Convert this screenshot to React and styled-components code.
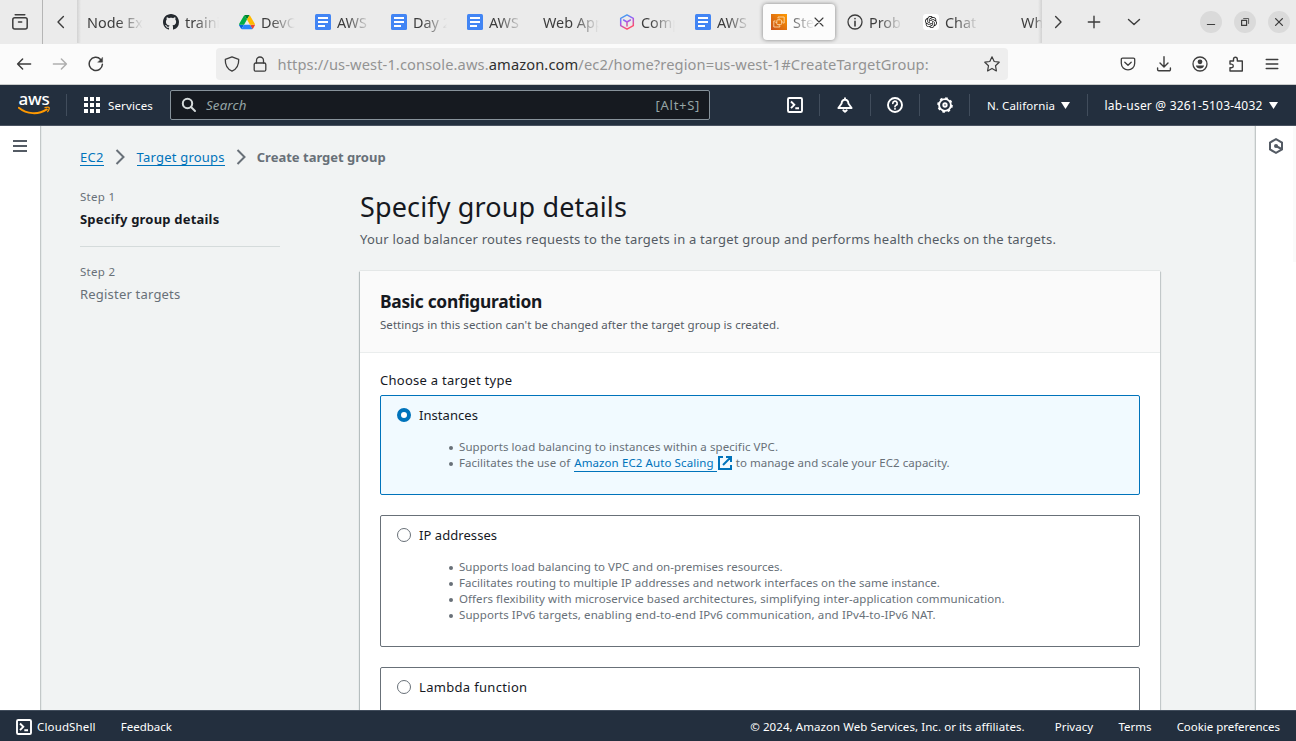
import React from "react";
import styled, { createGlobalStyle, css } from "styled-components";
import { SiOpenai } from "react-icons/si";

const Global = createGlobalStyle`
  * { box-sizing: border-box; }
  html, body { margin: 0; padding: 0; }
  body { font-family: "Noto Sans", "Open Sans", sans-serif; overflow: hidden; }
`;

const Window = styled.div`
  width: 1296px;
  height: 741px;
  display: flex;
  flex-direction: column;
  overflow: hidden;
  background: #f1f3f3;
`;

/* ---------- Browser chrome ---------- */
const TabBar = styled.div`
  height: 44px;
  flex: none;
  display: flex;
  background: #ebebeb;
  color: #3d3d3d;
`;
const BarCell = styled.div`
  width: ${(p) => p.$w}px;
  flex: none;
  display: flex;
  align-items: center;
  justify-content: center;
  padding-left: ${(p) => p.$pl || 0}px;
  padding-right: ${(p) => p.$pr || 0}px;
  border-right: ${(p) => (p.$divider ? "1px solid #b5b5b5" : "0")};
`;
const TabStrip = styled.div`
  width: 965px;
  flex: none;
  display: flex;
  overflow: hidden;
  position: relative;
  &::before, &::after {
    content: "";
    position: absolute;
    top: 0;
    bottom: 1px;
    width: 4px;
  }
  &::before { left: 0; background: linear-gradient(90deg, #d2d2d2, #ebebeb); }
  &::after { right: 0; background: linear-gradient(270deg, #d2d2d2, #ebebeb00); }
`;
const Tab = styled.div`
  width: 72px;
  height: 36px;
  margin: 4px 2px;
  padding: 0 8px;
  flex: none;
  display: flex;
  align-items: center;
  gap: 6px;
  border-radius: 4px;
  ${(p) => p.$active && css`
    background: #fcfcfc;
    box-shadow: 0 0 4px rgba(0, 0, 0, 0.45);
  `}
`;
const TabIcon = styled.span`
  width: 16px;
  height: 16px;
  flex: none;
  display: flex;
`;
const TabLabel = styled.span`
  flex: 1;
  min-width: 0;
  overflow: hidden;
  white-space: nowrap;
  font-size: 14.4px;
  line-height: 20px;
  padding-top: 1px;
  mask-image: linear-gradient(to left, transparent 0, #000 ${(p) => p.$fade}px);
`;
const TabClose = styled.span`
  width: 10px;
  margin-left: -7px;
  margin-right: 3px;
  flex: none;
  display: flex;
`;
const WinButtons = styled.div`
  flex: 1;
  display: flex;
  justify-content: flex-end;
  align-items: center;
  gap: 12px;
  padding-right: 6px;
`;
const WinButton = styled.span`
  width: 22px;
  height: 22px;
  border-radius: 50%;
  background: #dadada;
  display: flex;
  align-items: center;
  justify-content: center;
`;
const Toolbar = styled.div`
  height: 41px;
  flex: none;
  display: flex;
  align-items: center;
  background: #fbfbfb;
  border-bottom: 1px solid #cacccb;
  color: #3d3d3d;
`;
const NavButtons = styled.div`
  width: 216px;
  padding-left: 16px;
  display: flex;
  gap: 20px;
`;
const UrlBar = styled.div`
  width: 792px;
  height: 32px;
  display: flex;
  align-items: center;
  padding: 0 8px;
  border-radius: 4px;
  background: #eeeeee;
`;
const Url = styled.span`
  flex: 1;
  margin-left: 9.5px;
  padding-bottom: 1px;
  font-size: 14.67px;
  line-height: 20px;
  color: #939393;
  white-space: nowrap;
  letter-spacing: 0.11px;
  b { font-weight: 400; color: #2f2f2f; }
`;
const ToolbarEnd = styled.div`
  flex: 1;
  display: flex;
  justify-content: flex-end;
  gap: 20px;
  padding-right: 16px;
`;

/* ---------- Console header ---------- */
const ConsoleHeader = styled.header`
  height: 41px;
  flex: none;
  display: flex;
  align-items: center;
  background: #232f3e;
  border-bottom: 1px solid #4a5361;
  color: #fff;
`;
const AwsLogo = styled.div`
  width: 32px;
  margin-left: 18px;
  padding-bottom: 2px;
  display: flex;
  flex-direction: column;
  align-items: center;
  span { font-size: 17px; font-weight: 500; line-height: 12px; height: 13px; letter-spacing: -0.3px; }
`;
const HeaderRule = styled.span`
  width: 1px;
  height: 22px;
  background: #414d5c;
  margin-left: 16px;
`;
const ServicesButton = styled.div`
  display: flex;
  align-items: center;
  gap: 8px;
  margin-left: 17px;
  width: 86px;
`;
const Label = styled.span`
  font-size: ${(p) => p.$size || 11.5}px;
  letter-spacing: ${(p) => p.$ls || 0}px;
  line-height: 16px;
  padding-top: ${(p) => p.$drop || 0}px;
  white-space: nowrap;
`;
const SearchBox = styled.div`
  width: 540px;
  height: 30px;
  display: flex;
  align-items: center;
  padding: 0 9px 0 10px;
  background: #161a20;
  border: 1px solid #87929a;
  border-radius: 2px;
  color: #95a5a6;
  font-size: 13.3px;
  em { flex: 1; margin-left: 9px; letter-spacing: 0.15px; }
  span { font-size: 13px; letter-spacing: 0.7px; }
`;
const HeaderTools = styled.div`
  margin-left: 59px;
  display: flex;
  align-items: center;
`;
const ToolCell = styled.div`
  width: ${(p) => p.$w}px;
  height: 22px;
  padding-left: ${(p) => p.$pl || 0}px;
  display: flex;
  align-items: center;
  justify-content: center;
  gap: 6px;
  border-right: ${(p) => (p.$last ? "0" : "1px solid #414d5c")};
`;

/* ---------- Page body ---------- */
const Body = styled.div`
  height: 584px;
  flex: none;
  display: flex;
  overflow: hidden;
`;
const SideRail = styled.aside`
  width: ${(p) => (p.$right ? 41 : 40)}px;
  flex: none;
  display: flex;
  justify-content: center;
  padding-top: ${(p) => (p.$right ? 12 : 14)}px;
  background: ${(p) => (p.$right ? "linear-gradient(#fafafa, #fafafa) right top / 3px 136px no-repeat #fff" : "#fff")};
  z-index: 1;
  box-shadow: ${(p) => (p.$right ? "inset 1px 0 0 #c3c8c8, -1px 0 0 #e2e6e6" : "1px 0 0 #c3c8c8, 2px 0 0 #e6eaea")};
`;
const Page = styled.main`
  flex: 1;
  min-width: 0;
  padding: 20px 40px 0;
  overflow: hidden;
`;
const Breadcrumbs = styled.nav`
  display: flex;
  align-items: center;
  height: 22px;
  font-size: 13px;
  color: #687078;
  svg { margin: 0 11px 0 11px; }
`;
const Crumb = styled.a`
  color: #0073bb;
  line-height: 16px;
  border-bottom: 1px solid #0073bb;
  white-space: nowrap;
  letter-spacing: 0.22px;
`;
const CrumbCurrent = styled.b`
  color: #687078;
  white-space: nowrap;
  margin-left: -1px;
`;
const Columns = styled.div`
  display: flex;
`;
const Steps = styled.div`
  width: 200px;
  margin-right: 79px;
  flex: none;
  padding-top: 20px;
`;
const Step = styled.div`
  height: ${(p) => (p.$first ? 59 : 75)}px;
  border-bottom: ${(p) => (p.$first ? "1px solid #d5dbdb" : "0")};
  padding-top: ${(p) => (p.$first ? 0 : 16)}px;
  color: #687078;
`;
const StepNo = styled.div`
  font-size: 11.5px;
  line-height: 18px;
  letter-spacing: 0.3px;
`;
const StepName = styled.div`
  margin-top: 2px;
  font-size: 13px;
  line-height: 22px;
  font-weight: ${(p) => (p.$current ? 700 : 400)};
  color: ${(p) => (p.$current ? "#16191f" : "#687078")};
  letter-spacing: 0.2px;
  white-space: nowrap;
`;
const Content = styled.section`
  width: 802px;
  flex: none;
  padding-top: 21px;
`;
const Title = styled.h1`
  margin: 0 0 0 1px;
  font-size: 27px;
  line-height: 36px;
  font-weight: 400;
  color: #16191f;
  letter-spacing: 0.14px;
  white-space: nowrap;
`;
const Lead = styled.p`
  margin: 3px 0 0 1px;
  font-size: 13px;
  line-height: 22px;
  color: #545b64;
  letter-spacing: 0.217px;
  white-space: nowrap;
`;
const Card = styled.div`
  margin: 21px 0 0 1px;
  width: 800px;
  background: #fff;
  box-shadow: 0 0 1px 0 rgba(0, 28, 36, 0.3), 1px 1px 1px 0 rgba(0, 28, 36, 0.15), -1px 1px 1px 0 rgba(0, 28, 36, 0.2);
`;
const CardHeader = styled.div`
  height: 82px;
  padding: 18px 20px 0;
  background: #fafafa;
  border-bottom: 1px solid #eaeded;
`;
const CardTitle = styled.h2`
  margin: 0;
  font-size: 17.4px;
  line-height: 24px;
  color: #16191f;
  letter-spacing: -0.29px;
`;
const CardHint = styled.p`
  margin: 3px 0 0;
  font-size: 11.5px;
  line-height: 18px;
  color: #545b64;
  letter-spacing: 0.048px;
`;
const CardBody = styled.div`
  padding: 16px 20px 0;
  display: flex;
  flex-direction: column;
`;
const FieldLabel = styled.div`
  font-size: 13px;
  line-height: 22px;
  margin-bottom: 4px;
  color: #16191f;
  letter-spacing: 0.27px;
`;
const Tile = styled.div`
  height: ${(p) => p.$h}px;
  margin-bottom: 20px;
  padding: 8px 15px 0 16px;
  background: ${(p) => (p.$selected ? "#f1faff" : "#fff")};
  border: 1px solid ${(p) => (p.$selected ? "#0073bb" : "#687078")};
  border-radius: 2px;
`;
const TileHead = styled.div`
  display: flex;
  align-items: center;
  gap: 8px;
  font-size: 13px;
  line-height: 22px;
  color: #16191f;
  letter-spacing: ${(p) => p.$ls || 0}px;
`;
const Radio = styled.span`
  width: 14px;
  height: 14px;
  border-radius: 50%;
  background: #fff;
  border: ${(p) => (p.$on ? "4px solid #0073bb" : "1px solid #687078")};
`;
const Points = styled.ul`
  margin: 13px 0 0 53px;
  padding: 0;
  list-style: none;
`;
const Point = styled.li`
  display: flex;
  align-items: center;
  height: 16px;
  font-size: 11.5px;
  line-height: 16px;
  color: #687078;
  white-space: nowrap;
  letter-spacing: ${(p) => p.$ls || 0}px;
  &::before {
    content: "";
    width: 4px;
    height: 4px;
    margin: 1px 6px 0 -1px;
    border-radius: 50%;
    background: #687078;
  }
`;
const ExternalLink = styled.a`
  display: inline-flex;
  align-items: center;
  margin: 0 4px 0 4px;
  color: #0073bb;
  letter-spacing: 0.1px;
  span { border-bottom: 1px solid #0073bb; padding-right: 3px; }
  svg { margin-left: 1px; }
`;

/* ---------- Footer ---------- */
const Footer = styled.footer`
  height: 31px;
  flex: none;
  display: flex;
  align-items: center;
  padding: 2px 16px 0;
  background: #232f3e;
  border-top: 1px solid #414d5c;
  color: #fff;
  z-index: 2;
`;
const FooterLinks = styled.div`
  flex: 1;
  display: flex;
  align-items: center;
  gap: 5px;
`;
const FooterLegal = styled.div`
  display: flex;
`;
const Spacer = styled.span`
  width: ${(p) => p.$w}px;
`;

/* ---------- Icons ---------- */
const Ico = ({ s = 16, w = 1.3, children, vb = 16 }) => (
  <svg width={s} height={s} viewBox={`0 0 ${vb} ${vb}`} fill="none" stroke="currentColor" strokeWidth={w} strokeLinecap="round" strokeLinejoin="round">
    {children}
  </svg>
);
const DocIcon = () => (
  <svg width="16" height="16"><rect width="16" height="16" rx="1.5" fill="#4285f4" /><path d="M3 4h10M3 8h10M3 12h7" stroke="#fff" strokeWidth="1.8" /></svg>
);
const GithubIcon = () => (
  <svg width="16" height="16" viewBox="0 0 16 16" fill="#24292f"><path d="M8 0C3.58 0 0 3.58 0 8c0 3.54 2.29 6.53 5.47 7.59.4.07.55-.17.55-.38 0-.19-.01-.82-.01-1.49-2.01.37-2.53-.49-2.69-.94-.09-.23-.48-.94-.82-1.13-.28-.15-.68-.52-.01-.53.63-.01 1.08.58 1.23.82.72 1.21 1.87.87 2.33.66.07-.52.28-.87.51-1.07-1.78-.2-3.64-.89-3.64-3.95 0-.87.31-1.59.82-2.15-.08-.2-.36-1.02.08-2.12 0 0 .67-.21 2.2.82.64-.18 1.32-.27 2-.27s1.36.09 2 .27c1.53-1.04 2.2-.82 2.2-.82.44 1.1.16 1.92.08 2.12.51.56.82 1.27.82 2.15 0 3.07-1.87 3.75-3.65 3.95.29.25.54.73.54 1.48 0 1.07-.01 1.93-.01 2.2 0 .21.15.46.55.38A8.01 8.01 0 0 0 16 8c0-4.42-3.58-8-8-8z" /></svg>
);
const DriveIcon = () => (
  <svg width="16" height="16" viewBox="0 0 87.3 87.3"><g transform="translate(0 5)">
    <path d="m6.6 66.85 3.85 6.65c.8 1.4 1.95 2.5 3.3 3.3L27.5 53H0c0 1.55.4 3.1 1.2 4.5z" fill="#0066da" />
    <path d="M43.65 25 29.9 1.2c-1.35.8-2.5 1.9-3.3 3.3L1.2 48.5A9 9 0 0 0 0 53h27.5z" fill="#00ac47" />
    <path d="M73.55 76.8c1.35-.8 2.5-1.9 3.3-3.3l9.25-16c.8-1.4 1.2-2.95 1.2-4.5H59.8l5.85 11.5z" fill="#ea4335" />
    <path d="M43.65 25 57.4 1.2C56.05.4 54.5 0 52.9 0H34.4c-1.6 0-3.15.45-4.5 1.2z" fill="#00832d" />
    <path d="M59.8 53H27.5L13.75 76.8c1.35.8 2.9 1.2 4.5 1.2h50.8c1.6 0 3.15-.45 4.5-1.2z" fill="#2684fc" />
    <path d="m73.4 26.5-12.7-22c-.8-1.4-1.95-2.5-3.3-3.3L43.65 25 59.8 53h27.45c0-1.55-.4-3.1-1.2-4.5z" fill="#ffba00" /></g>
  </svg>
);
const CubeIcon = () => (
  <svg width="16" height="16" viewBox="0 0 16 16" fill="none" stroke="url(#cube)" strokeWidth="1.5" strokeLinejoin="round" strokeLinecap="round">
    <defs><linearGradient id="cube" x1="0" y1="0" x2="0.4" y2="1"><stop offset="0" stopColor="#21b8ee" /><stop offset=".5" stopColor="#9b5cf6" /><stop offset="1" stopColor="#ff4d6d" /></linearGradient></defs>
    <path d="M8 .9 14.3 4.4v7.2L8 15.1 1.7 11.6V4.4zM4.6 6 8 8l3.4-2M8 8v4" />
  </svg>
);
const Ec2Icon = () => (
  <svg width="16" height="16" viewBox="0 0 16 16" fill="none" stroke="#ffe3bd" strokeWidth="0.8">
    <defs><linearGradient id="ec2" x1="0" y1="1" x2="1" y2="0"><stop stopColor="#c8511b" /><stop offset="1" stopColor="#ff9900" /></linearGradient></defs>
    <rect width="16" height="16" fill="url(#ec2)" stroke="none" />
    <rect x="5.8" y="5.8" width="4.8" height="4.8" rx="1" />
    <path d="M7 4.3V3h6.2v6h-1.3M4.5 7H2.8v6h6v-1.2M8.2 4.4v1.2M11 8h1M4.5 8.5h1.2M8.2 10.8v1" />
  </svg>
);
const InfoIcon = () => <Ico><circle cx="8" cy="8" r="7" /><path d="M8 7.2V12M8 4.6v.2" strokeWidth="1.6" /></Ico>;
const GptBadge = styled.span`
  width: 16px;
  height: 16px;
  border-radius: 3px;
  background: #fff;
  display: flex;
  align-items: center;
  justify-content: center;
  color: #111;
  font-size: 12px;
`;
const ShellIcon = () => (
  <svg width="16" height="16" viewBox="0 0 16 16" fill="none" stroke="#fff" strokeWidth="1.9"><rect x="1" y="1" width="14" height="14" rx="1.3" /><path d="m4 4.5 3.3 3.3L4 11.2M8.3 11.3H12" /></svg>
);
const Caret = () => <svg width="9" height="7" viewBox="0 0 9 7"><path d="M0 0h9L4.5 7z" fill="#fff" /></svg>;
const CrumbArrow = () => <svg width="11" height="16" viewBox="0 0 11 16" fill="none" stroke="#687078" strokeWidth="2"><path d="m1.5 1 7 7-7 7" /></svg>;

const tabs = [
  { label: "Node Ex" },
  { icon: <GithubIcon />, label: "traini" },
  { icon: <DriveIcon />, label: "DevO" },
  { icon: <DocIcon />, label: "AWS" },
  { icon: <DocIcon />, label: "Day 2" },
  { icon: <DocIcon />, label: "AWS" },
  { label: "Web App" },
  { icon: <CubeIcon />, label: "Comp" },
  { icon: <DocIcon />, label: "AWS" },
  { icon: <Ec2Icon />, label: "Ste", active: true },
  { icon: <InfoIcon />, label: "Prob" },
  { icon: <GptBadge><SiOpenai /></GptBadge>, label: "Chat" },
  { icon: <span />, label: "Wh" },
];

export default function App() {
  return (
    <Window>
      <Global />
      <TabBar>
        <BarCell $w={43} $pr={2} $divider>
          <Ico s={18} vb={18} w={1.5}><path d="M4.2 1.8h9.6" /><rect x="1.8" y="4.8" width="14.4" height="11.2" rx="2" /><path d="M7.5 9h3.2" /></Ico>
        </BarCell>
        <BarCell $w={34} $pl={2}><Ico w={1.4}><path d="M10.4 2.6 5 8l5.4 5.4" /></Ico></BarCell>
        <TabStrip>
          {tabs.map((t, i) => (
            <Tab key={i} $active={t.active}>
              {t.icon && <TabIcon>{t.icon}</TabIcon>}
              <TabLabel $fade={t.active ? 28 : 25}>{t.label}</TabLabel>
              {t.active && <TabClose><Ico s={10} vb={10} w={1.1}><path d="m1 1 8 8M9 1 1 9" /></Ico></TabClose>}
            </Tab>
          ))}
        </TabStrip>
        <BarCell $w={30} $pl={1}><Ico w={1.4}><path d="M5.6 2.6 11 8l-5.4 5.4" /></Ico></BarCell>
        <BarCell $w={42} $pl={1}><Ico w={1.4}><path d="M8 2.3v11.4M2.3 8h11.4" /></Ico></BarCell>
        <BarCell $w={40}><Ico w={1.4}><path d="M2.5 5.4 8 10.6l5.5-5.2" /></Ico></BarCell>
        <WinButtons>
          <WinButton><Ico s={12} vb={12} w={1.2}><path d="M2.4 8.5h7.2" /></Ico></WinButton>
          <WinButton><Ico s={12} vb={12} w={1.2}><rect x="2.6" y="4.4" width="5" height="5" /><path d="M4.6 2.5h5v5" strokeWidth=".8" /></Ico></WinButton>
          <WinButton><Ico s={12} vb={12} w={1.3}><path d="m2.6 2.6 6.8 6.8M9.4 2.6 2.6 9.4" /></Ico></WinButton>
        </WinButtons>
      </TabBar>

      <Toolbar>
        <NavButtons>
          <Ico w={1.5}><path d="M14.6 8H1.6M6.6 3 1.6 8l5 5" /></Ico>
          <Ico w={1.5}><g opacity=".4"><path d="M1.4 8h13M9.4 3l5 5-5 5" /></g></Ico>
          <Ico w={1.5}><path d="M14.4 8.2A6.6 6.6 0 1 1 12.6 3.4" /><path d="M14.6 1.5v4.8H9.9z" fill="currentColor" strokeWidth=".4" /></Ico>
        </NavButtons>
        <UrlBar>
          <Ico><path d="M8 .8 14.7 3.4c.2 4.4-1.8 9.6-6.7 11.8C3.1 13 1.1 7.8 1.3 3.4z" /></Ico>
          <Spacer $w={12} />
          <Ico><rect x="2.2" y="7" width="11.6" height="8.2" rx="1.5" /><path d="M4.5 7V4.5a3.5 3.5 0 0 1 7 0V7" /></Ico>
          <Url>https://us-west-1.console.aws.<b>amazon.com</b>/ec2/home?region=us-west-1#CreateTargetGroup:</Url>
          <Ico w={1.2}><path d="m8 .8 2.2 4.7 5 .7-3.7 3.5.9 5.2L8 12.4l-4.4 2.5.9-5.2L.8 6.2l5-.7z" /></Ico>
        </UrlBar>
        <ToolbarEnd>
          <Ico><path d="M2.5 2.2h11a1.2 1.2 0 0 1 1.2 1.2v3.8a6.7 6.7 0 0 1-13.4 0V3.4a1.2 1.2 0 0 1 1.2-1.2zM4.8 6.2 8 9.3l3.2-3.1" /></Ico>
          <Ico w={1.4}><path d="M8 .8v10M4 7l4 4 4-4M1.6 12v1.6a1.2 1.2 0 0 0 1.2 1.2h10.4a1.2 1.2 0 0 0 1.2-1.2V12" /></Ico>
          <Ico><circle cx="8" cy="8" r="7" /><circle cx="8" cy="5.8" r="2.4" fill="currentColor" stroke="none" /><path d="M3.9 9.5h8.2c-.3 1.8-2 3.1-4.1 3.1s-3.8-1.3-4.1-3.1z" fill="currentColor" stroke="none" /></Ico>
          <Ico w={1.4}><path d="M2 5h3.5V3.2a1.9 1.9 0 0 1 3.8 0V5h5v10H2v-3.3h1.5a1.8 1.8 0 0 0 0-3.6H2z" /></Ico>
          <Ico w={1.4}><path d="M2.2 3.5h11.6M2.2 8h11.6M2.2 12.5h11.6" /></Ico>
        </ToolbarEnd>
      </Toolbar>

      <ConsoleHeader>
        <AwsLogo>
          <span>aws</span>
          <svg width="32" height="9" viewBox="0 0 32 9" fill="none"><path d="M.8 1.8c8 6.5 19.5 7.2 28 1.6" stroke="#ff9900" strokeWidth="1.9" strokeLinecap="round" /><path d="M26.5 1.6c2.5-.6 4.5-.5 4.7.1.2.7-.4 2.7-1.8 4.4" stroke="#ff9900" strokeWidth="1.2" /></svg>
        </AwsLogo>
        <HeaderRule />
        <ServicesButton>
          <svg width="16" height="16" fill="#fff">{[0, 6, 12].map((y) => [0, 6, 12].map((x) => <rect key={`${x}${y}`} x={x} y={y} width="4" height="4" />))}</svg>
          <Label $ls={0.13} $drop={1}>Services</Label>
        </ServicesButton>
        <SearchBox>
          <Ico w={2}><g stroke="#d5dbdb"><circle cx="6.5" cy="6.5" r="4.7" /><path d="m10 10 4 4" /></g></Ico>
          <em>Search</em>
          <span>[Alt+S]</span>
        </SearchBox>
        <HeaderTools>
          <ToolCell $w={51} $pl={2}><ShellIcon /></ToolCell>
          <ToolCell $w={51}><Ico w={1.9}><path d="M8 1.2v1.6M8 2.8C5.6 2.8 4.7 5 4.6 6.5L1.4 11h13.2l-3.2-4.5C11.3 5 10.4 2.8 8 2.8zM6.3 13.3 8 14.8l1.7-1.5" /></Ico></ToolCell>
          <ToolCell $w={49}><Ico w={1.9}><circle cx="8" cy="8" r="7" /><path d="M5.8 6.3a2.2 2.2 0 1 1 3.2 2c-.7.4-1 .6-1 1.3M8 11.7v.2" strokeWidth="1.7" /></Ico></ToolCell>
          <ToolCell $w={50}><Ico w={1.9}><circle cx="8" cy="8" r="5.9" /><circle cx="8" cy="8" r="6.9" strokeWidth="1.8" strokeDasharray="2.6 2.819" strokeLinecap="butt" /><circle cx="8" cy="8" r="1.7" /></Ico></ToolCell>
          <ToolCell $w={118}><Label $ls={0.12} $drop={1}>N. California</Label><Caret /></ToolCell>
          <ToolCell $w={206} $last><Label $size={12} $ls={0.2} $drop={1}>lab-user @ 3261-5103-4032</Label><Caret /></ToolCell>
        </HeaderTools>
      </ConsoleHeader>

      <Body>
        <SideRail>
          <svg width="14" height="12" fill="#545b64"><path d="M0 0h14v2H0zM0 5h14v2H0zM0 10h14v2H0z" /></svg>
        </SideRail>
        <Page>
          <Breadcrumbs>
            <Crumb>EC2</Crumb><CrumbArrow /><Crumb>Target groups</Crumb><CrumbArrow /><CrumbCurrent>Create target group</CrumbCurrent>
          </Breadcrumbs>
          <Columns>
            <Steps>
              <Step $first><StepNo>Step 1</StepNo><StepName $current>Specify group details</StepName></Step>
              <Step><StepNo>Step 2</StepNo><StepName>Register targets</StepName></Step>
            </Steps>
            <Content>
              <Title>Specify group details</Title>
              <Lead>Your load balancer routes requests to the targets in a target group and performs health checks on the targets.</Lead>
              <Card>
                <CardHeader>
                  <CardTitle>Basic configuration</CardTitle>
                  <CardHint>Settings in this section can't be changed after the target group is created.</CardHint>
                </CardHeader>
                <CardBody>
                  <FieldLabel>Choose a target type</FieldLabel>
                  <Tile $selected $h={100}>
                    <TileHead $ls={0.05}><Radio $on />Instances</TileHead>
                    <Points>
                      <Point $ls={0.07}>Supports load balancing to instances within a specific VPC.</Point>
                      <Point $ls={0.04}>Facilitates the use of <ExternalLink><span>Amazon EC2 Auto Scaling</span><svg width="14" height="14" viewBox="0 0 14 14" fill="none" stroke="#0073bb" strokeWidth="2"><path d="M5 1H1v12h12V9M8 1h5v5M13 1 5 9" /></svg></ExternalLink> to manage and scale your EC2 capacity.</Point>
                    </Points>
                  </Tile>
                  <Tile $h={132}>
                    <TileHead $ls={0.06}><Radio />IP addresses</TileHead>
                    <Points>
                      <Point $ls={0.035}>Supports load balancing to VPC and on-premises resources.</Point>
                      <Point $ls={0.028}>Facilitates routing to multiple IP addresses and network interfaces on the same instance.</Point>
                      <Point $ls={0.065}>Offers flexibility with microservice based architectures, simplifying inter-application communication.</Point>
                      <Point $ls={0.102}>Supports IPv6 targets, enabling end-to-end IPv6 communication, and IPv4-to-IPv6 NAT.</Point>
                    </Points>
                  </Tile>
                  <Tile $h={132}>
                    <TileHead $ls={0.32}><Radio />Lambda function</TileHead>
                  </Tile>
                </CardBody>
              </Card>
            </Content>
          </Columns>
        </Page>
        <SideRail $right>
          <svg width="16" height="16" viewBox="0 0 16 16" fill="none" stroke="#545b64" strokeWidth="2"><path d="M8 1.2 14 4.5v7L8 14.8 2 11.5v-7z" /><circle cx="8" cy="8" r="2" fill="#545b64" stroke="none" /><path d="m8 8 5.5 3" /></svg>
        </SideRail>
      </Body>

      <Footer>
        <FooterLinks><ShellIcon /><Label $ls={0.15}>CloudShell</Label><Spacer $w={15} /><Label>Feedback</Label></FooterLinks>
        <FooterLegal>
          <Label $ls={0.07}>© 2024, Amazon Web Services, Inc. or its affiliates.</Label><Spacer $w={30} />
          <Label>Privacy</Label><Spacer $w={25.5} /><Label>Terms</Label><Spacer $w={25} /><Label $ls={-0.03}>Cookie preferences</Label>
        </FooterLegal>
      </Footer>
    </Window>
  );
}
